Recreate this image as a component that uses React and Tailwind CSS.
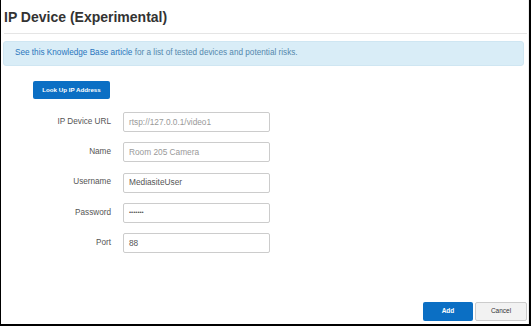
export default function App() {
  const fields = [
    { label: "IP Device URL", value: "rtsp://127.0.0.1/video1", placeholder: true },
    { label: "Name", value: "Room 205 Camera", placeholder: true },
    { label: "Username", value: "MediasiteUser" },
    { label: "Password", value: "•••••••", password: true },
    { label: "Port", value: "88" },
  ];

  return (
    <div
      className="w-[531px] h-[326px] bg-white border-l border-r-2 border-b-2 border-black flex"
      style={{ fontFamily: '"Liberation Sans", Arial, sans-serif' }}
    >
      <div className="flex-1 flex flex-col border-r border-[#ececec]">
        {/* Header */}
        <div className="ml-[3px] mr-[1px] h-[34px] pt-[9px] border-b border-[#e5e5e5]">
          <h1 className="text-[14px] leading-[16px] font-bold text-[#333]">
            IP Device (Experimental)
          </h1>
        </div>

        {/* Info alert */}
        <div className="ml-[2px] mr-[4px] mt-[7px] h-[25px] rounded-[3px] bg-[#d9edf7] border border-[#cfe6f2] flex items-center pl-[11px] text-[8.2px] text-[#5488ad]">
          <span>
            <span className="text-[#2a76bd]">See this Knowledge Base article</span> for a
            list of tested devices and potential risks.
          </span>
        </div>

        {/* Lookup button */}
        <div className="mt-[15px] ml-[32px] flex">
          <button className="w-[77px] h-[18px] rounded-[2px] bg-[#0b6fc4] text-white text-[6.2px] leading-none font-bold">
            Look Up IP Address
          </button>
        </div>

        {/* Form */}
        <div className="mt-[13px] flex flex-col gap-y-[10.3px]">
          {fields.map((f) => (
            <div key={f.label} className="flex items-center">
              <label className="w-[110px] text-right text-[8.2px] text-[#555]">
                {f.label}
              </label>
              <div
                className={`ml-[12px] w-[147px] h-[20px] border border-[#ccc] rounded-[2px] flex items-center pl-[5px] ${
                  f.placeholder ? "text-[#999]" : "text-[#555]"
                } ${f.password ? "text-[6px]" : "text-[8.3px]"}`}
              >
                {f.value}
              </div>
            </div>
          ))}
        </div>

        {/* Footer */}
        <div className="mt-auto pb-[3px] pr-[1px] flex justify-end gap-[2px]">
          <button className="w-[50px] h-[19px] rounded-[2px] bg-[#0b6fc4] text-white text-[6.5px] leading-none font-bold">
            Add
          </button>
          <button className="w-[52px] h-[19px] rounded-[2px] bg-[#f2f2f2] border border-[#ccc] text-[#333] text-[6.5px] leading-none">
            Cancel
          </button>
        </div>
      </div>
    </div>
  );
}
